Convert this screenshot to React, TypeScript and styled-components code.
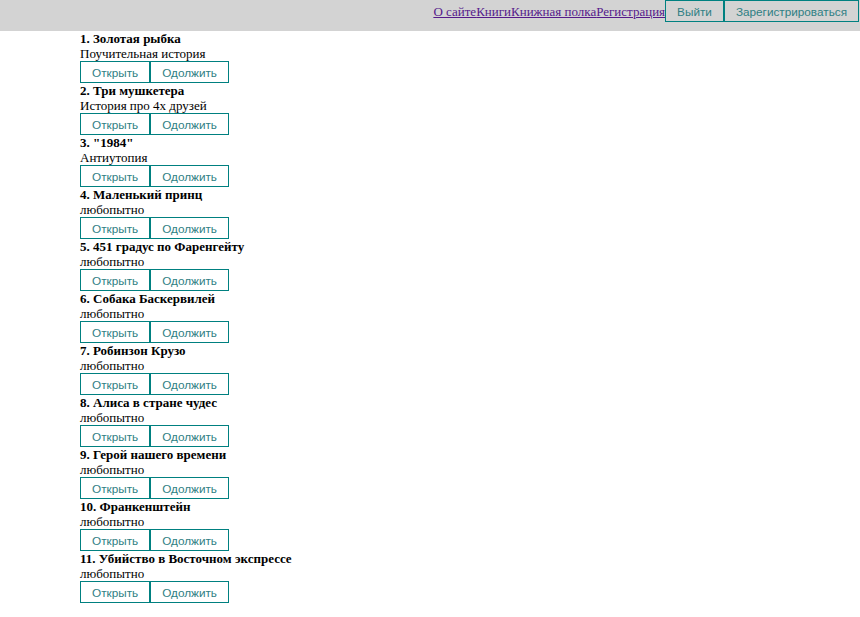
import React from "react";
import styled, { createGlobalStyle } from "styled-components";

const Global = createGlobalStyle`
  body { margin: 0; background: #fff; font-family: "Liberation Serif", "Times New Roman", serif; }
`;

const Header = styled.header`
  display: flex;
  justify-content: flex-end;
  align-items: flex-start;
  height: 31px;
  background: #d3d3d3;
  padding-right: 1px;
`;

const Nav = styled.nav`
  display: flex;
  padding-top: 4px;
  font-size: 13px;
`;

const NavLink = styled.a`
  color: #551a8b;
  text-decoration: underline;
`;

const Button = styled.button`
  font-family: "Liberation Sans", Arial, sans-serif;
  font-size: 11.75px;
  color: #2f7f84;
  background: transparent;
  border: 1px solid #008080;
  height: 22px;
  padding: 0 11px;
  margin: 0;
  cursor: pointer;
`;

const Main = styled.main`
  padding-left: 80px;
`;

const Item = styled.div`
  display: flex;
  flex-direction: column;
  align-items: flex-start;
`;

const Title = styled.div`
  font-weight: bold;
  font-size: 13px;
  line-height: 15px;
`;

const Desc = styled.div`
  font-size: 13px;
  line-height: 15px;
`;

const Actions = styled.div`
  display: flex;
`;

const books = [
  ["Золотая рыбка", "Поучительная история"],
  ["Три мушкетера", "История про 4х друзей"],
  ['"1984"', "Антиутопия"],
  ["Маленький принц", "любопытно"],
  ["451 градус по Фаренгейту", "любопытно"],
  ["Собака Баскервилей", "любопытно"],
  ["Робинзон Крузо", "любопытно"],
  ["Алиса в стране чудес", "любопытно"],
  ["Герой нашего времени", "любопытно"],
  ["Франкенштейн", "любопытно"],
  ["Убийство в Восточном экспрессе", "любопытно"],
];

export default function App() {
  return (
    <>
      <Global />
      <Header>
        <Nav>
          <NavLink href="#">О сайте</NavLink>
          <NavLink href="#">Книги</NavLink>
          <NavLink href="#">Книжная полка</NavLink>
          <NavLink href="#">Регистрация</NavLink>
        </Nav>
        <Button>Выйти</Button>
        <Button>Зарегистрироваться</Button>
      </Header>
      <Main>
        {books.map(([t, d], i) => (
          <Item key={i}>
            <Title>{i + 1}. {t}</Title>
            <Desc>{d}</Desc>
            <Actions>
              <Button>Открыть</Button>
              <Button>Одолжить</Button>
            </Actions>
          </Item>
        ))}
      </Main>
    </>
  );
}
